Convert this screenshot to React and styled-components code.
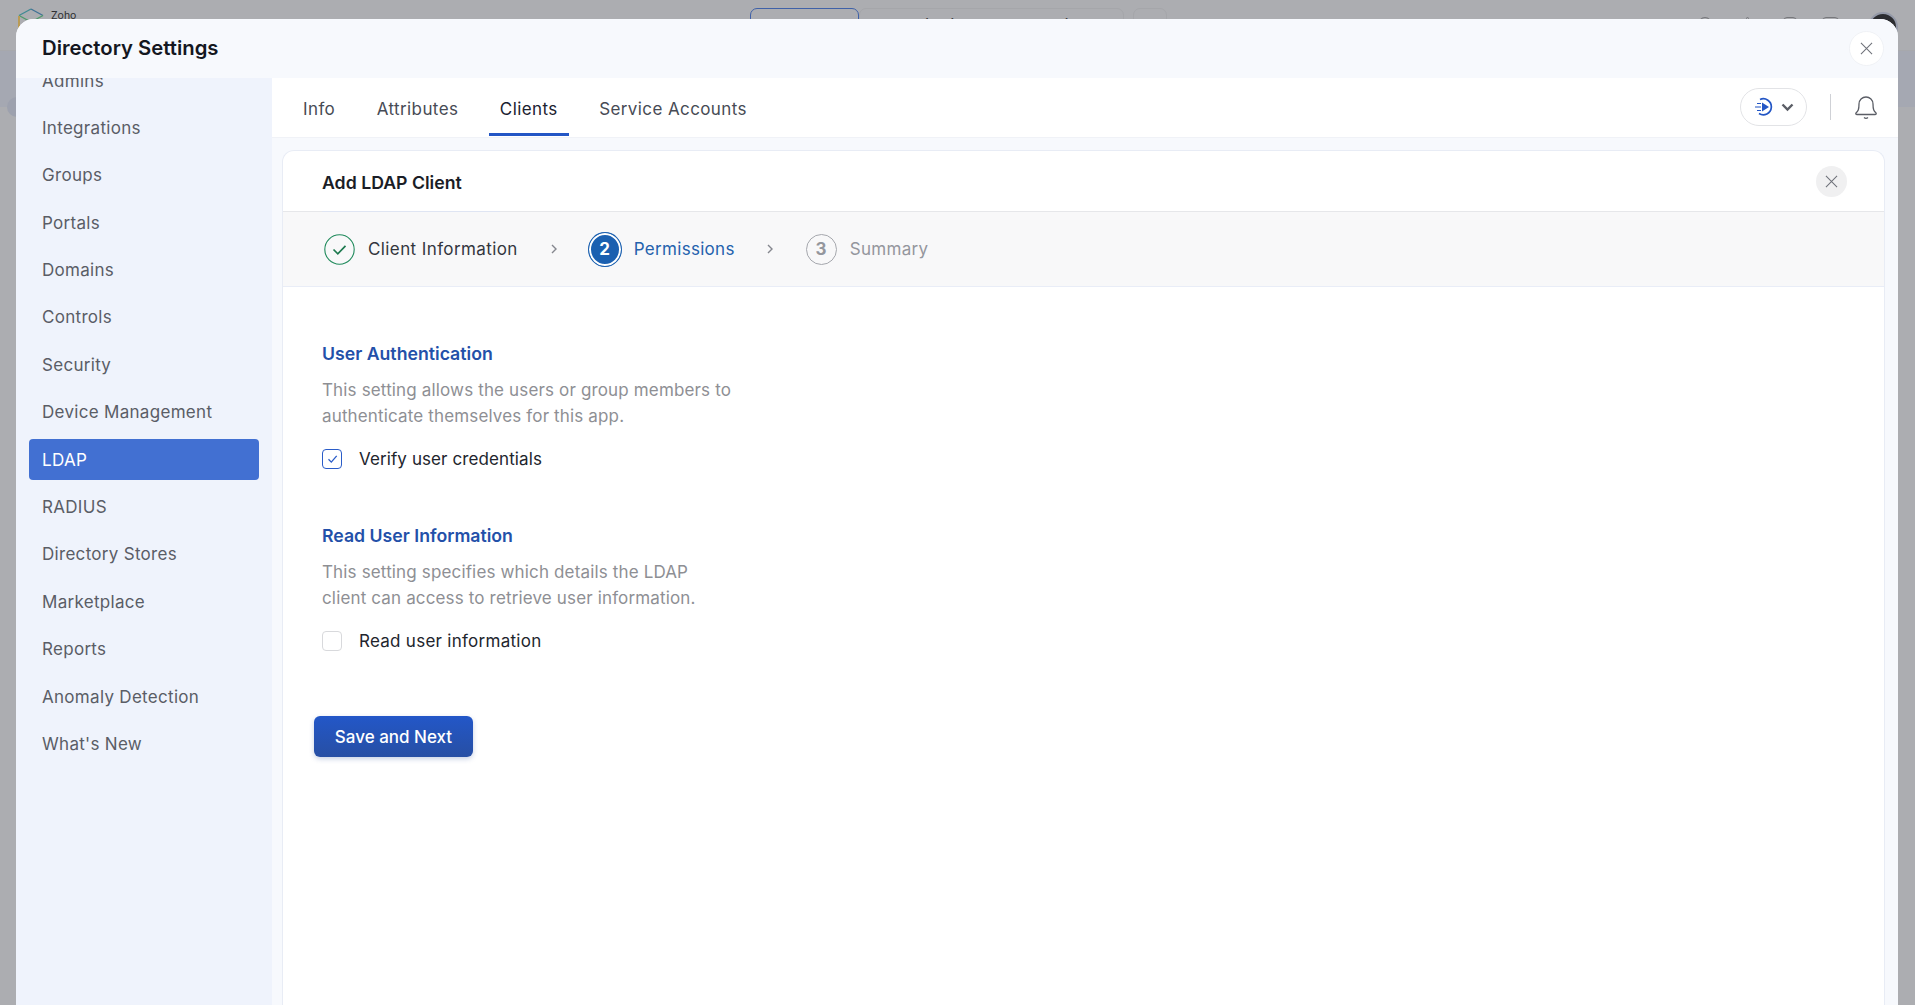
import React from "react";
import styled, { createGlobalStyle } from "styled-components";

const FONT = `Inter, "Noto Sans", "Liberation Sans", sans-serif`;

const Global = createGlobalStyle`
  html, body { margin: 0; padding: 0; height: 100%; overflow: hidden; background: #acadb1; }
  #root { height: 100%; }
  * { box-sizing: border-box; }
`;

const Page = styled.div`
  position: relative;
  width: 1915px;
  height: 1005px;
  overflow: hidden;
  font-family: ${FONT};
  background: #acadb1;
`;
const TopBar = styled.div`
  height: 51px;
  display: flex;
  align-items: flex-start;
  background: #acadb1;
  border-bottom: 1px solid #a7a8ac;
`;
const BackLogo = styled.div`
  width: 750px;
  flex: none;
  display: flex;
  align-items: flex-start;
  gap: 7px;
  padding: 8px 0 0 18px;
  font-size: 10.5px;
  line-height: 16px;
  color: #2c2d30;
`;
const BackTabs = styled.div`
  display: flex;
  margin-top: 8px;
`;
const BackTab = styled.div`
  width: ${p => p.$w}px;
  height: 30px;
  margin-right: ${p => p.$mr || 0}px;
  padding: 7px 0 0 ${p => p.$pl}px;
  display: flex;
  gap: 60px;
  border: 1px solid ${p => (p.$on ? "#3f61a8" : "#a5a6aa")};
  border-radius: 7px;
  font-size: 15px;
  line-height: 18px;
  color: ${p => (p.$on ? "#3f61a8" : "#3c3d41")};
`;
const BackIcons = styled.div`
  margin-left: auto;
  display: flex;
  align-items: flex-start;
  padding: 17px 17px 0 0;
`;
const BackIcon = styled.div`
  width: ${p => p.$w}px;
  height: 16px;
  margin-right: ${p => p.$mr}px;
  border: 1.5px solid #76777b;
  border-radius: ${p => p.$r || "4px"};
`;
const BackAvatar = styled.div`
  width: 30px;
  height: 30px;
  margin-top: -5px;
  border-radius: 50%;
  background: #2c2d31;
  border: 2px solid #9499a8;
`;
const BackBand = styled.div`
  position: relative;
  height: 56px;
  background: #a5a8b2;
`;
const BackDot = styled.div`
  position: absolute;
  left: 7px;
  top: 46px;
  width: 20px;
  height: 20px;
  border-radius: 50%;
  background: #9da1ae;
`;

const Modal = styled.div`
  position: absolute;
  left: 16px;
  top: 19px;
  width: 1882px;
  height: 986px;
  border-radius: 18px 18px 0 0;
  background: #f7f9fd;
  display: flex;
  flex-direction: column;
  overflow: hidden;
`;
const ModalHeader = styled.header`
  position: relative;
  z-index: 1;
  height: 59px;
  flex: none;
  display: flex;
  align-items: center;
  justify-content: space-between;
  padding: 0 14px 0 26px;
  background: #f7f9fd;
`;
const ModalTitle = styled.h1`
  margin: 0;
  padding-bottom: 2px;
  font-size: 20.3px;
  font-weight: 600;
  color: #14171f;
`;
const CloseButton = styled.button`
  width: ${p => p.$size}px;
  height: ${p => p.$size}px;
  padding: 0;
  border: ${p => (p.$soft ? "none" : "1px solid #eff1f5")};
  border-radius: 50%;
  background: ${p => (p.$soft ? "#f0f0f1" : "#ffffff")};
  display: flex;
  align-items: center;
  justify-content: center;
`;
const Body = styled.div`
  flex: 1;
  min-height: 0;
  display: flex;
`;
const Sidebar = styled.nav`
  width: 256px;
  flex: none;
  background: #eff3fc;
  padding: 0 13px;
  overflow: hidden;
`;
const SideList = styled.div`
  margin-top: -18px;
  display: flex;
  flex-direction: column;
`;
const SideItem = styled.div`
  height: 41px;
  margin-bottom: 6.4px;
  padding-left: 13px;
  display: flex;
  align-items: center;
  border-radius: 4px;
  font-size: 17px;
  letter-spacing: 0.3px;
  color: ${p => (p.$active ? "#ffffff" : "#5a5d66")};
  background: ${p => (p.$active ? "#4270d2" : "transparent")};
`;
const Main = styled.main`
  flex: 1;
  min-width: 0;
  display: flex;
  flex-direction: column;
`;
const TabBar = styled.div`
  height: 60px;
  flex: none;
  background: #ffffff;
  border-bottom: 1px solid #f0f2f7;
  display: flex;
  align-items: flex-start;
  padding-right: 20px;
`;
const Tabs = styled.div`
  display: flex;
  padding-left: 20px;
`;
const Tab = styled.div`
  position: relative;
  height: 58px;
  padding: 4px 11px 0;
  margin-right: 19.5px;
  display: flex;
  align-items: center;
  font-size: 17px;
  letter-spacing: 0.4px;
  color: ${p => (p.$active ? "#1b2130" : "#474b55")};
  &::after {
    content: "";
    display: ${p => (p.$active ? "block" : "none")};
    position: absolute;
    left: 0;
    right: 0;
    bottom: 0;
    height: 3px;
    background: #2356c5;
  }
`;
const TabTools = styled.div`
  margin-left: auto;
  display: flex;
  align-items: center;
  height: 58px;
`;
const SpeedPill = styled.div`
  width: 67px;
  height: 38px;
  border: 1px solid #e2e3e6;
  border-radius: 19px;
  display: flex;
  align-items: center;
  justify-content: center;
  gap: 7px;
`;
const ToolDivider = styled.div`
  width: 1px;
  height: 26px;
  margin: 0 23px 0 23px;
  background: #cfd1d6;
`;
const Card = styled.section`
  flex: 1;
  margin: 12px 13px 0 10px;
  background: #ffffff;
  border: 1px solid #e8ecf5;
  border-bottom: none;
  border-radius: 12px 12px 0 0;
  display: flex;
  flex-direction: column;
  overflow: hidden;
`;
const CardHeader = styled.div`
  position: relative;
  height: 61px;
  flex: none;
  display: flex;
  align-items: center;
  justify-content: space-between;
  padding: 0 37px 0 39px;
  border-bottom: 1px solid #e6e7ea;
  &::after {
    content: "";
    position: absolute;
    left: 39px;
    bottom: -1px;
    width: 178px;
    height: 1px;
    background: #dfe5f3;
  }
`;
const CardTitle = styled.h2`
  margin: 0;
  padding-top: 3px;
  font-size: 17.7px;
  font-weight: 600;
  color: #1a1d26;
`;
const Stepper = styled.div`
  height: 75px;
  flex: none;
  display: flex;
  align-items: center;
  padding-left: 41px;
  background: #f8f8f9;
  border-bottom: 1px solid #e9edf7;
`;
const Step = styled.div`
  display: flex;
  align-items: center;
  gap: ${p => p.$gap}px;
  font-size: 17px;
  letter-spacing: ${p => p.$track}px;
  color: ${p => p.$color};
`;
const StepNumber = styled.div`
  width: 31px;
  height: 31px;
  border-radius: 50%;
  border: 1px solid #a5a7ad;
  display: flex;
  align-items: center;
  justify-content: center;
  font-size: 17px;
  font-weight: 700;
  color: #94969d;
`;
const StepCurrent = styled.div`
  width: 34px;
  height: 35px;
  border-radius: 50%;
  background: #1b60b0;
  box-shadow: inset 0 0 0 2px #ffffff;
  border: 1px solid #1b60b0;
  display: flex;
  align-items: center;
  justify-content: center;
  font-size: 17px;
  font-weight: 700;
  color: #ffffff;
`;
const StepChevron = styled.svg`
  width: 12px;
  height: 12px;
  margin: 0 ${p => p.$right}px 0 ${p => p.$left}px;
  flex: none;
`;
const Content = styled.div`
  padding: 55px 0 0 39px;
  display: flex;
  flex-direction: column;
`;
const Section = styled.div`
  margin-bottom: ${p => p.$mb}px;
`;
const SectionTitle = styled.h3`
  margin: 0 0 11px;
  font-size: 17.7px;
  line-height: 24px;
  font-weight: 600;
  color: #2350a9;
`;
const SectionText = styled.p`
  margin: 0 0 19px;
  width: 412px;
  font-size: 17px;
  letter-spacing: 0.15px;
  line-height: 26px;
  color: #8e8f94;
`;
const CheckRow = styled.label`
  display: flex;
  align-items: center;
  gap: 17px;
  height: 21px;
  font-size: 17px;
  letter-spacing: ${p => p.$track}px;
  color: #22252d;
`;
const Checkbox = styled.span`
  width: 20px;
  height: 20px;
  flex: none;
  border-radius: 4px;
  border: 1px solid ${p => (p.$checked ? "#2a5cc8" : "#d8d9dc")};
  background: #ffffff;
  display: flex;
  align-items: center;
  justify-content: center;
`;
const PrimaryButton = styled.button`
  align-self: flex-start;
  margin-left: -8px;
  width: 159px;
  height: 41px;
  border: none;
  border-radius: 6px;
  background: linear-gradient(#2357c8, #274fa4);
  box-shadow: 0 2px 5px rgba(35, 70, 150, 0.25);
  font-family: inherit;
  font-size: 17px;
  font-weight: 500;
  color: #ffffff;
`;

const X = ({ s = 14, c = "#6d7078" }) => (
  <svg width={s} height={s} viewBox="0 0 14 14" fill="none">
    <path d="M1 1l12 12M13 1L1 13" stroke={c} strokeWidth="1.1" />
  </svg>
);

const Chevron = ({ left, right }) => (
  <StepChevron $left={left} $right={right} viewBox="0 0 12 12" fill="none">
    <path d="M4 2l4 4-4 4" stroke="#85878e" strokeWidth="1.4" />
  </StepChevron>
);

const items = ["Admins","Integrations","Groups","Portals","Domains","Controls","Security","Device Management","LDAP","RADIUS","Directory Stores","Marketplace","Reports","Anomaly Detection","What's New"];

export default function App() {
  return (
    <Page>
      <Global />
      <TopBar>
        <BackLogo>
          <svg width="26" height="26" viewBox="0 0 26 26" fill="none">
            <path d="M13 1l12 6.5" stroke="#3f7195" strokeWidth="1.3" />
            <path d="M13 1L1 7.5" stroke="#3f8a94" strokeWidth="1.3" />
            <path d="M1 7.5l12 6.5 12-6.5" stroke="#4f9a6a" strokeWidth="1.3" />
            <path d="M1 8v16" stroke="#b99b55" strokeWidth="2" />
          </svg>
          <span>Zoho</span>
        </BackLogo>
        <BackTabs>
          <BackTab $on $w={109} $pl={20}>Personal</BackTab>
          <BackTab $w={265} $mr={9} $pl={22}>
            <span>Organization</span>
            <span>Admin</span>
          </BackTab>
          <BackTab $w={34} $pl={9} />
        </BackTabs>
        <BackIcons>
          <BackIcon $w={14} $mr={34} $r="50%" />
          <BackIcon $w={3} $mr={34} />
          <BackIcon $w={14} $mr={25} />
          <BackIcon $w={17} $mr={29} />
          <BackAvatar />
        </BackIcons>
      </TopBar>
      <BackBand>
        <BackDot />
      </BackBand>
      <Modal>
        <ModalHeader>
          <ModalTitle>Directory Settings</ModalTitle>
          <CloseButton $size={35}><X s={13} /></CloseButton>
        </ModalHeader>
        <Body>
          <Sidebar>
            <SideList>
              {items.map(i => <SideItem key={i} $active={i === "LDAP"}>{i}</SideItem>)}
            </SideList>
          </Sidebar>
          <Main>
            <TabBar>
              <Tabs>
                <Tab>Info</Tab>
                <Tab>Attributes</Tab>
                <Tab $active>Clients</Tab>
                <Tab>Service Accounts</Tab>
              </Tabs>
              <TabTools>
                <SpeedPill>
                  <svg width="20" height="20" viewBox="0 0 20 20" fill="none">
                    <path d="M6 2.5A8 8 0 1 1 5 16.5" stroke="#2356c5" strokeWidth="1.7" />
                    <path d="M8 5.5l7 4.5-7 4.5z" fill="#2356c5" />
                    <path d="M3 6.5h4M1 10h6M3 13.5h4" stroke="#2356c5" strokeWidth="1.2" />
                  </svg>
                  <svg width="13" height="9" viewBox="0 0 13 9" fill="none">
                    <path d="M1.5 1.5L6.5 6.5l5-5" stroke="#5b5e66" strokeWidth="2.4" />
                  </svg>
                </SpeedPill>
                <ToolDivider />
                <svg width="24" height="26" viewBox="0 0 24 26" fill="none">
                  <path d="M2 19c2-2 3-3 3-9a7 7 0 0 1 14 0c0 6 1 7 3 9 .6.8 0 1.5-1 1.5H3c-1 0-1.6-.7-1-1.5z" stroke="#5b5e66" strokeWidth="1.3" />
                  <path d="M10 23.5c1 .8 3 .8 4 0" stroke="#5b5e66" strokeWidth="1.3" />
                </svg>
              </TabTools>
            </TabBar>
            <Card>
              <CardHeader>
                <CardTitle>Add LDAP Client</CardTitle>
                <CloseButton $soft $size={31}><X s={13} /></CloseButton>
              </CardHeader>
              <Stepper>
                <Step $gap={13} $track={0.4} $color="#33363e">
                  <svg width="31" height="31" viewBox="0 0 31 31" fill="none">
                    <circle cx="15.5" cy="15.5" r="14.7" stroke="#1f8a5b" strokeWidth="1.1" />
                    <path d="M9.5 15.5l4.3 4.3 7.7-8" stroke="#1f7a50" strokeWidth="1.7" />
                  </svg>
                  Client Information
                </Step>
                <Chevron left={30} right={28} />
                <Step $gap={12} $track={0.3} $color="#2462ad">
                  <StepCurrent>2</StepCurrent>
                  Permissions
                </Step>
                <Chevron left={29} right={30} />
                <Step $gap={13} $track={0.3} $color="#94969d">
                  <StepNumber>3</StepNumber>
                  Summary
                </Step>
              </Stepper>
              <Content>
                <Section $mb={55}>
                  <SectionTitle>User Authentication</SectionTitle>
                  <SectionText>This setting allows the users or group members to authenticate themselves for this app.</SectionText>
                  <CheckRow $track={0.1}>
                    <Checkbox $checked>
                      <svg width="11" height="10" viewBox="0 0 11 10" fill="none">
                        <path d="M1.5 5.3l2.8 2.8L9.7 1.8" stroke="#2a5cc8" strokeWidth="1.3" />
                      </svg>
                    </Checkbox>
                    Verify user credentials
                  </CheckRow>
                </Section>
                <Section $mb={65}>
                  <SectionTitle>Read User Information</SectionTitle>
                  <SectionText>This setting specifies which details the LDAP client can access to retrieve user information.</SectionText>
                  <CheckRow $track={0.27}>
                    <Checkbox />
                    Read user information
                  </CheckRow>
                </Section>
                <PrimaryButton>Save and Next</PrimaryButton>
              </Content>
            </Card>
          </Main>
        </Body>
      </Modal>
    </Page>
  );
}
